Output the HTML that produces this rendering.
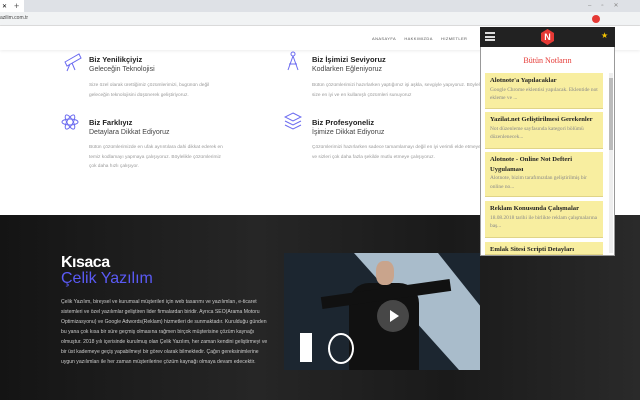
<!DOCTYPE html>
<html><head><meta charset="utf-8"><style>
*{margin:0;padding:0;box-sizing:border-box}
body{width:640px;height:400px;overflow:hidden;font-family:"Liberation Sans",sans-serif;background:#fff;position:relative}
.abs{position:absolute}
.t{font-size:7.5px;font-weight:bold;color:#222}
.s{font-size:7px;color:#444}
.p{font-size:4.8px;color:#999;line-height:9.5px}
.note{position:absolute;left:485px;width:118px;background:#f8eea0;border-bottom:1px solid #e0d488;padding:3px 5px;font-family:"Liberation Serif",serif}
.note b{display:block;font-size:6.6px;color:#222;line-height:9.5px}
.note span{display:block;font-size:5.4px;color:#888;line-height:8.5px}
</style></head><body>
<div class="abs" style="left:0;top:0;width:640px;height:12px;background:#dee1e6"></div>
<div class="abs" style="left:0;top:0;width:24px;height:12px;background:#fff;font-size:6px;padding:3px 2px">✕</div>
<div class="abs" style="left:14px;top:1px;font-size:9px;color:#555">+</div>
<div class="abs" style="left:588px;top:2px;font-size:6px;color:#888;letter-spacing:10px">–▫✕</div>
<div class="abs" style="left:0;top:12px;width:640px;height:14px;background:#f1f3f4;border-bottom:1px solid #ddd"></div>
<div class="abs" style="left:0;top:15px;font-size:5px;color:#444">azilim.com.tr</div>
<div class="abs" style="left:592px;top:15px;width:8px;height:8px;border-radius:50%;background:#e53935"></div>
<div class="abs" style="left:0;top:26px;width:640px;height:24px;background:#fff;box-shadow:0 1px 3px rgba(0,0,0,.08)"></div>
<div class="abs" style="left:372px;top:36px;font-size:4px;color:#555;letter-spacing:.4px;word-spacing:7px">ANASAYFA HAKKIMIZDA HIZMETLER</div>
<svg class="abs" style="left:62px;top:50px" width="22" height="22" viewBox="0 0 22 22" fill="none" stroke="#6b6bf0" stroke-width="1"><path d="M3 12l14-8 2 4-14 8zM8 14l-3 7M10 13l3 7"/></svg>
<svg class="abs" style="left:286px;top:50px" width="14" height="22" viewBox="0 0 14 22" fill="none" stroke="#6b6bf0" stroke-width="1"><circle cx="7" cy="4" r="2"/><path d="M7 6l-5 14M7 6l5 14M3 14h8"/></svg>
<svg class="abs" style="left:61px;top:113px" width="18" height="18" viewBox="0 0 18 18" fill="none" stroke="#6b6bf0" stroke-width="1"><ellipse cx="9" cy="9" rx="8" ry="3"/><ellipse cx="9" cy="9" rx="8" ry="3" transform="rotate(60 9 9)"/><ellipse cx="9" cy="9" rx="8" ry="3" transform="rotate(-60 9 9)"/></svg>
<svg class="abs" style="left:284px;top:112px" width="18" height="18" viewBox="0 0 18 18" fill="none" stroke="#6b6bf0" stroke-width="1"><path d="M9 1l8 4-8 4-8-4zM1 9l8 4 8-4M1 13l8 4 8-4"/></svg>
<div class="abs t" style="left:89px;top:55px">Biz Yenilikçiyiz</div>
<div class="abs s" style="left:89px;top:66px">Geleceğin Teknolojisi</div>
<div class="abs p" style="left:89px;top:81px;width:140px">Size özel olarak ürettiğimiz çözümlerimizi, bugünün değil geleceğin teknolojisini düşünerek geliştiriyoruz.</div>
<div class="abs t" style="left:312px;top:55px">Biz İşimizi Seviyoruz</div>
<div class="abs s" style="left:312px;top:66px">Kodlarken Eğleniyoruz</div>
<div class="abs p" style="left:312px;top:81px;width:175px">Bütün çözümlerimizi hazırlarken yaptığımız işi aşkla, sevgiyle yapıyoruz. Böylelikle size en iyi ve en kullanışlı çözümleri sunuyoruz</div>
<div class="abs t" style="left:89px;top:118px">Biz Farklıyız</div>
<div class="abs s" style="left:89px;top:129px">Detaylara Dikkat Ediyoruz</div>
<div class="abs p" style="left:89px;top:143px;width:140px">Bütün çözümlerimizde en ufak ayrıntılara dahi dikkat ederek en temiz kodlamayı yapmaya çalışıyoruz. Böylelikle çözümlerimiz çok daha hızlı çalışıyor.</div>
<div class="abs t" style="left:312px;top:118px">Biz Profesyoneliz</div>
<div class="abs s" style="left:312px;top:129px">İşimize Dikkat Ediyoruz</div>
<div class="abs p" style="left:312px;top:143px;width:175px">Çözümlerimizi hazırlarken sadece tamamlamayı değil en iyi verimli elde etmeye ve sizleri çok daha fazla şekilde mutlu etmeye çalışıyoruz.</div>
<div class="abs" style="left:0;top:215px;width:640px;height:185px;background:linear-gradient(90deg,#141414,#262626 40%,#1a1a1a 70%,#2a2a2a)"></div>
<div class="abs" style="left:61px;top:254px;font-size:16px;font-weight:bold;color:#fff;letter-spacing:-.5px">Kısaca</div>
<div class="abs" style="left:61px;top:270px;font-size:16px;color:#5a5af5">Çelik Yazılım</div>
<div class="abs" style="left:61px;top:297px;width:208px;font-size:5.1px;line-height:10px;color:#ccc">Çelik Yazılım, bireysel ve kurumsal müşterileri için web tasarımı ve yazılımları, e-ticaret sistemleri ve özel yazılımlar geliştiren lider firmalardan biridir. Ayrıca SEO(Arama Motoru Optimizasyonu) ve Google Adwords(Reklam) hizmetleri de sunmaktadır. Kurulduğu günden bu yana çok kısa bir süre geçmiş olmasına rağmen birçok müşterisine çözüm kaynağı olmuştur. 2018 yılı içerisinde kurulmuş olan Çelik Yazılım, her zaman kendini geliştirmeyi ve bir üst kademeye geçiş yapabilmeyi bir görev olarak bilmektedir. Çağın gereksinimlerine uygun yazılımları ile her zaman müşterilerine çözüm kaynağı olmaya devam edecektir.</div>
<div class="abs" style="left:284px;top:253px;width:196px;height:117px;background:#1c2630;overflow:hidden">
<div class="abs" style="left:70px;top:0;width:140px;height:117px;background:#a9bccb;clip-path:polygon(0 0,60% 0,100% 60%,100% 100%,75% 100%)"></div>
<div class="abs" style="left:65px;top:30px;width:70px;height:87px;background:#111;border-radius:20px 20px 0 0"></div>
<div class="abs" style="left:37px;top:35px;width:130px;height:12px;background:#111;transform:rotate(-8deg)"></div>
<div class="abs" style="left:92px;top:8px;width:18px;height:24px;background:#c9a48c;border-radius:40%"></div>
<div class="abs" style="left:93px;top:47px;width:32px;height:32px;border-radius:50%;background:rgba(90,90,90,.75)"></div>
<div class="abs" style="left:106px;top:57px;width:0;height:0;border-left:9px solid #fff;border-top:6px solid transparent;border-bottom:6px solid transparent"></div>
<div class="abs" style="left:16px;top:80px;width:12px;height:29px;background:#fff"></div>
<div class="abs" style="left:44px;top:80px;width:26px;height:31px;border:2px solid #fff;border-radius:50%"></div>
</div>
<div class="abs" style="left:480px;top:27px;width:135px;height:229px;background:#fff;border:1px solid #999"></div>
<div class="abs" style="left:480px;top:27px;width:135px;height:20px;background:#222"></div>
<div class="abs" style="left:485px;top:32px;width:10px;height:9px;border-top:2px solid #ddd;border-bottom:2px solid #ddd"><div style="margin-top:1.5px;height:2px;background:#ddd"></div></div>
<div class="abs" style="left:541px;top:29px;width:13px;height:16px;background:#e53935;clip-path:polygon(50% 0,100% 25%,100% 75%,50% 100%,0 75%,0 25%);color:#fff;font-size:9px;font-weight:bold;text-align:center;line-height:16px">N</div>
<div class="abs" style="left:601px;top:31px;color:#f5c400;font-size:8px">★</div>
<div class="abs" style="left:480px;top:56px;width:135px;text-align:center;font-family:'Liberation Serif',serif;font-size:8px;color:#e53935">Bütün Notların</div>
<div class="abs" style="left:609px;top:73px;width:4px;height:180px;background:#eee"><div style="margin-top:5px;height:72px;background:#bbb"></div></div>
<div class="note" style="top:73px;height:36px"><b>Alotnote'a Yapılacaklar</b><span>Google Chrome eklentisi yapılacak. Eklentide not ekleme ve ...</span></div>
<div class="note" style="top:112px;height:37px"><b>Yazilat.net Geliştirilmesi Gerekenler</b><span>Not düzenleme sayfasında kategori bölümü düzenlenecek...</span></div>
<div class="note" style="top:152px;height:45px"><b>Alotnote - Online Not Defteri Uygulaması</b><span>Alotnote, bizim tarafımızdan geliştirilmiş bir online no...</span></div>
<div class="note" style="top:201px;height:37px"><b>Reklam Konusunda Çalışmalar</b><span>18.08.2018 tarihi ile birlikte reklam çalışmalarına baş...</span></div>
<div class="note" style="top:242px;height:13px;overflow:hidden"><b>Emlak Sitesi Scripti Detayları</b></div>
</body></html>
